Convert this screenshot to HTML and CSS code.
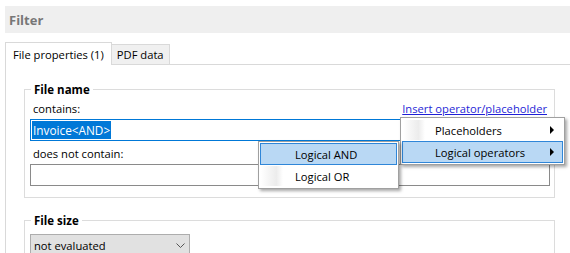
FILE: index.html
```html
<!DOCTYPE html>
<html lang="en">
<head>
    <meta charset="UTF-8">
    <title>Filter</title>
    <link rel="stylesheet" href="styles.css">
</head>
<body>
    <!-- Header -->
    <div class="header">Filter</div>

    <!-- Tabs -->
    <div class="tabs">
        <div class="tab active">File properties (1)</div>
        <div class="tab">PDF data</div>
    </div>

    <div class="panel">
        <fieldset class="group">
            <legend>File name</legend>
            <div class="label-row">
                <span>contains:</span>
                <a href="#" class="link">Insert operator/placeholder</a>
            </div>
            <div class="text-box focused"><span class="selected">Invoice&lt;AND&gt;</span></div>
            <div class="label-row">
                <span>does not contain:</span>
            </div>
            <div class="text-box"></div>
        </fieldset>

        <fieldset class="group size-group">
            <legend>File size</legend>
            <div class="select-box">
                <span>not evaluated</span>
                <svg class="chevron" width="9" height="5" viewBox="0 0 9 5">
                    <path d="M0.5 0.5 L4.5 4.5 L8.5 0.5" fill="none" stroke="#555" stroke-width="1"/>
                </svg>
            </div>
        </fieldset>
    </div>

    <!-- Context menu -->
    <div class="menu main-menu">
        <div class="menu-item"><span class="gutter"></span><span class="item-text">Placeholders</span><span class="arrow"></span></div>
        <div class="menu-item hover"><span class="gutter"></span><span class="item-text">Logical operators</span><span class="arrow"></span></div>
    </div>

    <div class="menu sub-menu">
        <div class="menu-item hover"><span class="gutter"></span><span class="item-text">Logical AND</span></div>
        <div class="menu-item"><span class="gutter"></span><span class="item-text">Logical OR</span></div>
    </div>
</body>
</html>
```

FILE: styles.css
```css
* {
    margin: 0;
    padding: 0;
    box-sizing: border-box;
}

body {
    font-family: "Open Sans", Arial, sans-serif;
    font-size: 11.2px;
    color: #000;
    background-color: #fff;
    overflow: hidden;
}

/* Header */
.header {
    margin: 6px 0 0 5px;
    height: 27px;
    background-color: #efefef;
    padding-left: 4px;
    display: flex;
    align-items: center;
    font-weight: bold;
    font-size: 13px;
    color: #777;
}

/* Tabs */
.tabs {
    margin: 10px 0 0 5px;
    height: 22px;
    display: flex;
    align-items: flex-end;
    border-bottom: 1px solid #d9d9d9;
}

.tab {
    height: 20px;
    padding: 0 5px;
    display: flex;
    align-items: center;
    background-color: #f0f0f0;
    border: 1px solid #d9d9d9;
    border-left: none;
    border-bottom: none;
}

.tab.active {
    height: 23px;
    margin-bottom: -1px;
    padding: 0 7px;
    background-color: #fff;
    border-left: 1px solid #d9d9d9;
}

/* Panel */
.panel {
    margin-left: 5px;
    border-left: 1px solid #d9d9d9;
    padding: 17px 15px 0 18px;
    height: 200px;
}

.group {
    border: 1px solid #dcdcdc;
    padding: 0 4px 10px 5px;
}

.group legend {
    font-weight: bold;
    font-size: 11.5px;
    padding: 0 3px;
    margin-left: 1px;
}

.size-group {
    margin-top: 15px;
}

.label-row {
    display: flex;
    justify-content: space-between;
    height: 22px;
    align-items: center;
    padding: 0 3px;
}

.link {
    color: #1f1fd6;
    text-decoration: underline;
}

.text-box {
    height: 22px;
    border: 1px solid #8a8a8a;
    padding: 1px;
    display: flex;
    align-items: stretch;
    margin-bottom: 1px;
}

.text-box.focused {
    border-color: #0078d7;
}

.selected {
    background-color: #0078d7;
    color: #fff;
    display: flex;
    align-items: center;
    padding: 0 1px;
    font-size: 11.8px;
}

.select-box {
    width: 160px;
    height: 22px;
    margin-top: 6px;
    background-color: #e1e1e1;
    border: 1px solid #adadad;
    display: flex;
    align-items: center;
    justify-content: space-between;
    padding: 0 4px 0 3px;
}

/* Menus */
.menu {
    position: absolute;
    background-color: #fff;
    border: 1px solid #a0a0a0;
    padding: 1px;
    box-shadow: 2px 2px 3px rgba(0, 0, 0, 0.35);
}

.main-menu {
    left: 400px;
    top: 117px;
    width: 165px;
}

.sub-menu {
    left: 258px;
    top: 141px;
    width: 141px;
}

.menu-item {
    height: 22px;
    display: flex;
    align-items: center;
    border: 1px solid transparent;
}

.menu-item.hover {
    background-color: #b9d8f4;
    border-color: #2f86d8;
}

.gutter {
    width: 22px;
    height: 100%;
    background: linear-gradient(to right, #fff, #ececec 70%, #fff);
}

.menu-item.hover .gutter {
    background: none;
}

.main-menu .item-text {
    margin-left: 10px;
    flex-grow: 1;
}

.sub-menu .item-text {
    margin-left: 12px;
}

.arrow {
    width: 0;
    height: 0;
    border-top: 4px solid transparent;
    border-bottom: 4px solid transparent;
    border-left: 4px solid #000;
    margin-right: 8px;
}
```
